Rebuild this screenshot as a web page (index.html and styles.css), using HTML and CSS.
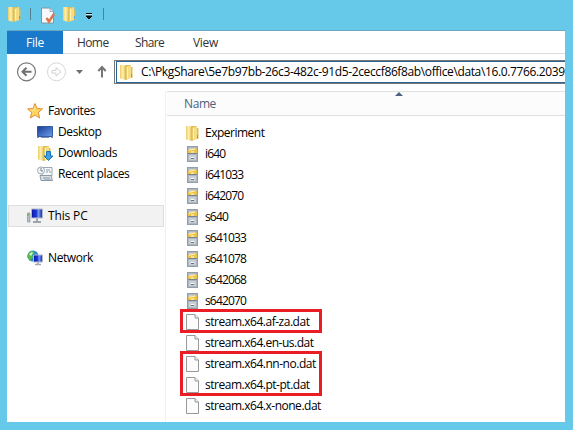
FILE: index.html
```
<!DOCTYPE html>
<html lang="en">
<head>
<meta charset="utf-8">
<title>File Explorer</title>
<link rel="stylesheet" href="styles.css">
</head>
<body>
<svg class="defs" width="0" height="0">
  <defs>
    <linearGradient id="gold" x2="1"><stop stop-color="#e9cd66"/><stop offset=".45" stop-color="#fff0ae"/><stop offset="1" stop-color="#dfbd50"/></linearGradient>
    <linearGradient id="blue" x2="1" y2="1"><stop stop-color="#153a91"/><stop offset="1" stop-color="#6ca0ed"/></linearGradient>
    <linearGradient id="screen" x2="1"><stop stop-color="#0712a5"/><stop offset=".5" stop-color="#2541dc"/><stop offset=".6" stop-color="#7f9df5"/><stop offset="1" stop-color="#1324b8"/></linearGradient>
    <symbol id="folder" viewBox="0 0 16 16"><path d="M6 1h6v2h1.500v11H6z" fill="#dfbe55"/><path d="M1 1h4l2 1.500V16l-6-1.500z" fill="url(#gold)"/><path d="M7 3l5-2v13l-5 2z" fill="#f3dc82"/><path d="M7 3v13" stroke="#d4b14a" stroke-width=".8"/><path d="M8.500 3v11" stroke="#fff2b5"/><path d="M12.500 10v3" stroke="#58a9c9"/></symbol>
    <symbol id="cab" viewBox="0 0 16 16"><path d="M2 0h11v16H2z" fill="#959da7"/><path d="M3 1h9v14H3z" fill="#aeb6bf"/><path d="M4 2h7v5H4zM4 9h7v5H4z" fill="#c9d0d5"/><path d="M3 4l7-2 2 1v4H3z" fill="#edc348"/><path d="M4 4.300l6-1.300" stroke="#fff4bd"/><path d="M3 7.500h9" stroke="#798590"/><path d="M6 6h3M6 11.500h3" stroke="#fff"/><path d="M6 12.500h3" stroke="#68737d"/></symbol>
    <symbol id="page" viewBox="0 0 16 16"><path d="M1.500 .5h8.500l3.500 3.500v11.500h-12z" fill="#fcfcfc" stroke="#999"/><path d="M10 .5V4h3.500" fill="#eee" stroke="#999"/></symbol>
  </defs>
</svg>
<header class="titlebar">
  <svg class="i16"><use href="#folder"/></svg><i class="sep s1"></i>
  <svg class="check" width="16" height="17" viewBox="0 0 16 17"><path d="M1.500 1h8.500l3.500 3.500v11.500h-12z" fill="#f5f8fc" stroke="#8095a2"/><path d="M10 1v3.500h3.500" fill="#e4eaf0" stroke="#8095a2" stroke-width=".7"/><path d="M6.500 11l2.500 3.500L14 7" fill="none" stroke="#e2744b" stroke-width="2.500"/></svg>
  <svg class="i16 f2"><use href="#folder"/></svg>
  <svg class="drop" width="8" height="8" viewBox="0 0 8 8"><path d="M1 1.500h6M1 4h6L4 7z" fill="#111" stroke="#111"/><path d="M1 2.600h6" stroke="#fff" stroke-width=".7"/></svg><i class="sep s2"></i>
</header>
<main class="window">
  <nav class="tabs"><b class="file"><span>File</span></b><span class="home">Home</span><span class="share">Share</span><span class="view">View</span></nav>
  <div class="toolbar">
    <svg class="arrows" width="107" height="37" viewBox="0 0 107 37"><g fill="none"><circle cx="19.500" cy="17.800" r="9" stroke="#777" stroke-width="1.200"/><path d="M15.500 17.800h9M19.500 13.800l-4 4 4 4" stroke="#707070" stroke-width="2"/><circle cx="49.500" cy="17.800" r="9" stroke="#d7d7d7"/><path d="M45 16.500h4v-3l5 4.300-5 4.300v-3h-4z" stroke="#d2d2d2"/><path d="M95 23.500v-10M91.300 17l3.700-4 3.700 4" stroke="#757575" stroke-width="2"/></g><path d="M69 16h7l-3.500 4z" fill="#707070"/></svg>
    <div class="address"><div class="field"><svg class="i16"><use href="#folder"/></svg><span class="path">C:\PkgShare\5e7b97bb-26c3-482c-91d5-2ceccf86f8ab\office\data\16.0.7766.2039</span></div></div>
  </div>
  <div class="content">
    <aside>
      <div class="item"><svg class="i16" viewBox="0 0 16 16"><path d="M8 .5l2.100 5 5.400.4-4.200 3.600 1.400 5.500L8 12l-4.700 3 1.400-5.500L.5 5.900l5.400-.4z" fill="#ffd564" stroke="#e68e32"/><path d="M8 2.500v4L3 7l4 1" fill="#fff0aa"/></svg><span class="fav">Favorites</span></div>
      <div class="item sub"><svg class="i16" viewBox="0 0 16 16"><path d="M.5 2.500h15v10H.5z" fill="url(#blue)" stroke="#355ca2"/><path d="M0 13.500h16" stroke="#7893b5"/><path d="M2 13.500h2M12 13.500h2" stroke="#e7f0f5"/></svg><span class="desktop">Desktop</span></div>
      <div class="item sub"><svg class="i16" viewBox="0 0 16 16"><use href="#folder" width="16" height="16"/><path d="M9.500 6.500h4V11H16l-4.500 4.500L7 11h2.500z" fill="#459ee3" stroke="#1976bd"/></svg><span class="downloads">Downloads</span></div>
      <div class="item sub"><svg class="i16" viewBox="0 0 16 16"><path d="M5 1.500h10v8H5z" fill="#f5f8f9" stroke="#9ba8af"/><path d="M3 9.500h11l1.500 5H4z" fill="#dbe2e6" stroke="#8e9aa1"/><path d="M9 4h4M9 6h2M12 6h2M6 12h7M7 14h7" stroke="#849bac"/><circle cx="4" cy="4.500" r="3.500" fill="#f4f6f7" stroke="#a1abb1"/><path d="M4 2v3h2" fill="none" stroke="#65879f"/></svg><span class="recent">Recent places</span></div>
      <div class="item pc"><svg class="i16" viewBox="0 0 16 16"><path d="M4.500 1h11v9h-11z" fill="url(#screen)" stroke="#b4bac4"/><path d="M.5 5h2.500v9H.5z" fill="#b9bec4" stroke="#8b9299" stroke-width=".7"/><path d="M1 6v2" stroke="#41b72f"/><path d="M10 10.500v3M6 14h8" stroke="#9da4ae" stroke-width="2"/></svg><span class="thispc">This PC</span></div>
      <div class="item net"><svg class="i16" viewBox="0 0 16 16"><circle cx="6" cy="6" r="5.500" fill="#268ed0"/><path d="M1 4l3-3 4 1-3 3 1 2-3 4-3-4z" fill="#59b94b"/><path d="M2 4l3-2 1 1-2 3z" fill="#d8f6bd"/><path d="M6.500 5h9v7h-9z" fill="url(#screen)" stroke="#b4bac4"/><path d="M11 12v2M8 14.500h6" stroke="#a3a9b2" stroke-width="1.500"/></svg><span class="network">Network</span></div>
    </aside>
    <section class="files">
      <div class="header"><span>Name</span><svg class="sort" width="8" height="4" viewBox="0 0 8 4"><path d="M4 0l4 4H0z" fill="#4b6184"/></svg></div>
      <div class="list">
        <div class="row"><svg class="i16"><use href="#folder"/></svg><span class="exp">Experiment</span></div>
        <div class="row"><svg class="i16"><use href="#cab"/></svg><span>i640</span></div>
        <div class="row"><svg class="i16"><use href="#cab"/></svg><span>i641033</span></div>
        <div class="row"><svg class="i16"><use href="#cab"/></svg><span>i642070</span></div>
        <div class="row"><svg class="i16"><use href="#cab"/></svg><span>s640</span></div>
        <div class="row"><svg class="i16"><use href="#cab"/></svg><span>s641033</span></div>
        <div class="row"><svg class="i16"><use href="#cab"/></svg><span>s641078</span></div>
        <div class="row"><svg class="i16"><use href="#cab"/></svg><span>s642068</span></div>
        <div class="row"><svg class="i16"><use href="#cab"/></svg><span>s642070</span></div>
        <div class="row"><svg class="i16"><use href="#page"/></svg><span class="stream">stream.x64.af-za.dat</span></div>
        <div class="row"><svg class="i16"><use href="#page"/></svg><span class="stream">stream.x64.en-us.dat</span></div>
        <div class="row"><svg class="i16"><use href="#page"/></svg><span class="stream">stream.x64.nn-no.dat</span></div>
        <div class="row"><svg class="i16"><use href="#page"/></svg><span class="stream">stream.x64.pt-pt.dat</span></div>
        <div class="row"><svg class="i16"><use href="#page"/></svg><span class="stream">stream.x64.x-none.dat</span></div>
        <i class="mark one"></i><i class="mark two"></i>
      </div>
    </section>
  </div>
</main>
</body>
</html>
```
FILE: styles.css
```
* { box-sizing: border-box; }
body { margin: 0; width: 573px; height: 430px; overflow: hidden; background: #66c9e9; font: 12px/20px "Open Sans", "Noto Sans", sans-serif; color: #000; }
.defs { position: absolute; }
.i16 { width: 16px; height: 16px; flex: none; display: block; }
span { white-space: nowrap; }
.titlebar { height: 30px; padding: 0 0 2px 7px; display: flex; align-items: center; }
.sep { width: 1px; height: 12px; background: #527f91; }
.s1 { margin-left: 7px; }
.check { margin-left: 9px; margin-top: 2px; }
.f2 { margin-left: 6px; }
.drop { margin: 4px 0 0 7px; }
.s2 { margin-left: 10px; }
.window { width: 558px; height: 392px; margin-left: 7px; background: #fff; overflow: hidden; }
.tabs { height: 24px; display: flex; align-items: center; border-bottom: 1px solid #dadbdc; border-top: 1px solid #68a9c0; padding-top: 2px; color: #333; letter-spacing: -.6px; }
.file { width: 56px; height: 23px; margin-top: -2px; background: #1979ca; color: #fff; font-weight: 400; text-align: center; line-height: 23px; letter-spacing: -.2px; }
.home { margin-left: 14px; width: 58px; }
.share { width: 58px; }
.view { letter-spacing: -.3px; }
.toolbar { height: 37px; display: flex; }
.arrows { flex: none; }
.address { margin-top: 6px; width: 451px; height: 24px; border: 1px solid #777; border-right: 0; padding-left: 1px; }
.field { height: 22px; border: 1px solid #2a6496; border-right: 0; padding-left: 2px; display: flex; align-items: center; }
.path { margin-left: 6px; letter-spacing: -.37px; }
.content { display: flex; height: 331px; }
aside { width: 159px; border-right: 1px solid #f0f0f0; padding-top: 9px; letter-spacing: -.4px; }
.item { height: 21px; display: flex; align-items: center; padding-left: 20px; }
.item span { margin-left: 5px; }
.sub { padding-left: 30px; }
.pc { margin: 21px 1px 0; height: 22px; padding-left: 18px; border: 1px solid #dedede; background: #f2f2f2; letter-spacing: -.15px; }
.net { margin-top: 20px; }
.files { width: 399px; }
.header { height: 25px; border: solid #e0e0e0; border-width: 1px 0; background: #fcfcfc; padding: 2px 0 0 17px; margin-left: 1px; display: flex; color: #4c607a; letter-spacing: -.4px; }
.header span { width: 211px; }
.sort { margin-top: -2px; }
.list { position: relative; padding: 6px 0 0 19px; letter-spacing: -.85px; }
.row { height: 21px; display: flex; align-items: center; }
.row span { margin-left: 4px; }
.row .exp { letter-spacing: -.5px; }
.row .stream { letter-spacing: -.48px; }
.mark { position: absolute; left: 14px; width: 142px; border: 3px solid #ea1c24; }
.one { top: 193px; height: 24px; }
.two { top: 235px; height: 45px; }
```
